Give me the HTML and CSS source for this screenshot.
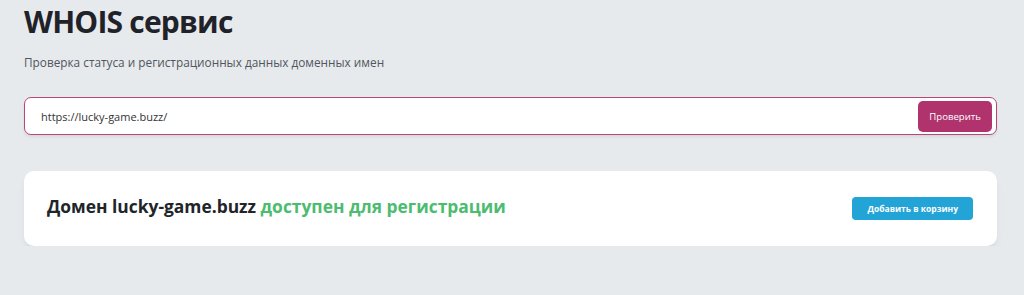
FILE: index.html
```html
<!DOCTYPE html>
<html lang="ru">

<head>
  <meta charset="UTF-8">
  <meta name="viewport" content="width=device-width, initial-scale=1.0">
  <title>WHOIS сервис</title>
  <link rel="stylesheet" href="styles.css">
</head>

<body>
  <div id="page">
    <h1 class="page-title">WHOIS сервис</h1>
    <p class="page-lead">Проверка статуса и регистрационных данных доменных имен</p>

    <!-- Search form -->
    <form class="search-form">
      <input class="search-input" type="text" value="https://lucky-game.buzz/">
      <button class="search-button" type="button">Проверить</button>
    </form>

    <!-- Result -->
    <div class="result-card">
      <div class="result-text">Домен lucky-game.buzz <span class="available">доступен для регистрации</span></div>
      <button class="cart-button" type="button">Добавить в корзину</button>
    </div>
  </div>
</body>

</html>
```

FILE: styles.css
```css
body {
  margin: 0;
  font-family: "Open Sans", Arial, sans-serif;
  background-color: #e7eaed;
  color: #212529;
}

#page {
  padding: 0 27px 0 24px;
}

.page-title {
  margin: 0;
  font-size: 30px;
  font-weight: 700;
  line-height: 44px;
  letter-spacing: -0.8px;
  color: #1f2329;
}

.page-lead {
  margin: 10px 0 0;
  font-size: 11.8px;
  line-height: 16px;
  color: #50565c;
}

.search-form {
  display: flex;
  align-items: center;
  margin-top: 27px;
  padding: 3px 4px 2px 16px;
  height: 31px;
  background-color: #fff;
  border: 1px solid #b8457c;
  border-radius: 7px;
  box-shadow: 0 2px 3px rgba(0, 0, 0, 0.08);
}

.search-input {
  flex: 1;
  border: none;
  outline: none;
  padding: 0;
  font-family: inherit;
  font-size: 11px;
  color: #333;
  background: transparent;
}

.search-button {
  height: 31px;
  padding: 0 11px;
  font-family: inherit;
  font-size: 9.6px;
  color: #fff;
  background-color: #b0336d;
  border: none;
  border-radius: 5px;
  cursor: pointer;
}

.result-card {
  display: flex;
  align-items: center;
  justify-content: space-between;
  margin-top: 36px;
  height: 75px;
  padding: 0 24px 0 23px;
  background-color: #fff;
  border-radius: 10px;
  box-shadow: 0 6px 8px -4px rgba(150, 165, 180, 0.45);
}

.result-text {
  margin-top: -5px;
  font-size: 17.4px;
  font-weight: 700;
  color: #212529;
}

.available {
  color: #4dbb70;
}

.cart-button {
  height: 23px;
  padding: 0 15px;
  font-family: inherit;
  font-size: 8.5px;
  font-weight: 700;
  color: #fff;
  background-color: #22a4d6;
  border: none;
  border-radius: 4px;
  cursor: pointer;
}
```
